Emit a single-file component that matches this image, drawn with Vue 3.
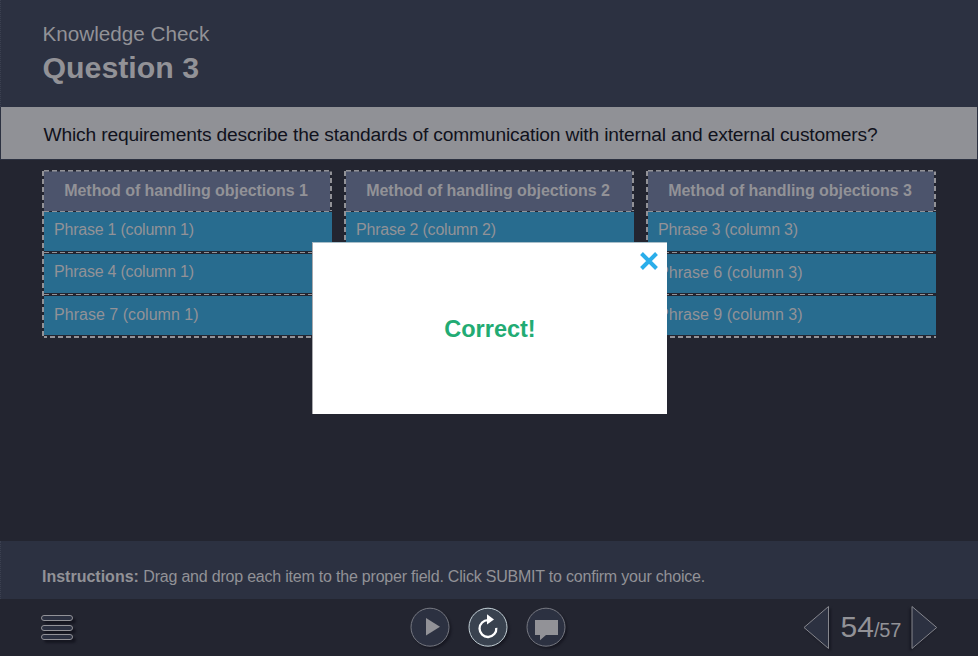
<script setup>
import { ref } from 'vue'

const showResult = ref(true)
const page = 54
const total = 57
const columns = [
    { title: 'Method of handling objections 1', phrases: [{ text: 'Phrase 1 (column 1)' }, { text: 'Phrase 4 (column 1)' }, { text: 'Phrase 7 (column 1)', placed: true }] },
    { title: 'Method of handling objections 2', phrases: [{ text: 'Phrase 2 (column 2)' }, { text: '' }, { text: '' }] },
    { title: 'Method of handling objections 3', phrases: [{ text: 'Phrase 3 (column 3)' }, { text: 'Phrase 6 (column 3)', placed: true }, { text: 'Phrase 9 (column 3)', placed: true }] },
]
</script>

<template>
    <div class="player">
        <header class="top">
            <p class="kicker">Knowledge Check</p>
            <h1>Question 3</h1>
        </header>
        <div class="question"><span>Which requirements describe the standards of communication with internal and external customers?</span></div>
        <main class="board">
            <div class="column" v-for="column of columns" :key="column.title">
                <div class="heading"><span>{{ column.title }}</span></div>
                <div class="phrase" v-for="(phrase, i) of column.phrases" :key="i" :class="{ placed: phrase.placed }">
                    <span>{{ phrase.text }}</span>
                </div>
            </div>
        </main>
        <div class="instructions"><p><b>Instructions:</b> <span>Drag and drop each item to the proper field. Click SUBMIT to confirm your choice.</span></p></div>
        <footer class="controls">
            <button class="menu" aria-label="Menu"><i></i><i></i><i></i></button>
            <div class="round-buttons">
                <button class="round" aria-label="Play">
                    <svg width="40" height="40" viewBox="0 0 40 40">
                        <circle cx="20" cy="19.2" r="19" />
                        <path class="glyph" d="M16 10 L30 18.7 L16 27.5 Z" />
                    </svg>
                </button>
                <button class="round active" aria-label="Replay">
                    <svg width="40" height="40" viewBox="0 0 40 40">
                        <circle cx="20" cy="19.2" r="19" />
                        <path class="arc" d="M28.3 19.8 A8.4 8.4 0 1 1 20.3 12.2" />
                        <path class="glyph" d="M19 6.2 L26 11.6 L19 16.5 Z" />
                    </svg>
                </button>
                <button class="round" aria-label="Comment">
                    <svg width="40" height="40" viewBox="0 0 40 40">
                        <circle cx="20" cy="19.2" r="19" />
                        <path class="glyph" d="M9 12 H32 V27 H20 L14 32.3 V27 H9 Z" />
                    </svg>
                </button>
            </div>
            <div class="pager">
                <svg class="arrow" width="28" height="46" viewBox="0 0 28 46">
                    <path d="M1 22.5 L25.5 1.5 V43.5 Z" />
                </svg>
                <div class="pages"><span class="current">{{ page }}</span><span class="total">/{{ total }}</span></div>
                <svg class="arrow next" width="28" height="46" viewBox="0 0 28 46">
                    <path d="M1 1.5 L25.7 22.5 L1 43.5 Z" />
                </svg>
            </div>
        </footer>
        <div class="popup" v-if="showResult">
            <button class="close" aria-label="Close" @click="showResult = false">
                <svg width="20" height="20" viewBox="0 0 20 20">
                    <path d="M2.5 2.5 L17.5 17.5 M17.5 2.5 L2.5 17.5" />
                </svg>
            </button>
            <strong>Correct!</strong>
        </div>
    </div>
</template>

<style>
body {
    margin: 0;
    background: #232530;
}
</style>

<style scoped>
.player {
    position: relative;
    display: flex;
    flex-direction: column;
    width: 978px;
    height: 656px;
    overflow: hidden;
    box-sizing: border-box;
    background: #232530;
    color: #929297;
    font-family: "Liberation Sans", Arial, sans-serif;
}

.player * {
    box-sizing: border-box;
}

button {
    padding: 0;
    border: none;
    background: none;
}

svg {
    display: block;
}

.top {
    height: 107px;
    padding: 22px 0 0 41.5px;
    background: #2c3141;
    border-left: 1px dotted #3b4050;
}

.kicker {
    margin: 0;
    font-size: 20.7px;
    line-height: 24px;
}

h1 {
    margin: 4px 0 0;
    font-size: 30.3px;
    line-height: 36px;
}

.question {
    height: 53px;
    padding: 16px 0 0 42.5px;
    border: 1px solid #2c3141;
    border-top: none;
    background: #909196;
    color: #10121c;
    font-size: 19.2px;
    line-height: 24px;
    letter-spacing: -0.155px;
    white-space: nowrap;
}

.board {
    display: flex;
    gap: 12px;
    height: 381px;
    padding: 9px 42px 0;
}

.column {
    --dash-x: repeating-linear-gradient(90deg, #929297 0 5px, transparent 5px 8px);
    --dash-y: repeating-linear-gradient(180deg, #929297 0 5px, #232530 5px 8px);
    width: 290px;
    height: 169px;
    padding-left: 2px;
    background: var(--dash-y) 0 2px / 2px 100% no-repeat, var(--dash-x) 0 100% / 100% 2px no-repeat;
}

.heading {
    --dash-x: repeating-linear-gradient(90deg, #929297 0 5px, #232530 5px 8px);
    height: 43px;
    padding: 12px 4px 0 0;
    background:
        var(--dash-x) 0 1px / 100% 1.5px no-repeat,
        var(--dash-x) 0 100% / 100% 1.5px no-repeat,
        var(--dash-y) 100% 1px / 2px 100% no-repeat,
        linear-gradient(transparent 1px, #4c546c 1px);
    font-size: 16px;
    font-weight: bold;
    line-height: 20px;
    letter-spacing: -0.06px;
    text-align: center;
}

.phrase {
    height: 42px;
    padding: 8px 0 0 10px;
    background: var(--dash-x) 0 40px / 100% 1px no-repeat, linear-gradient(#286c8f 39px, #232530 39px);
    font-size: 16px;
    line-height: 20px;
    letter-spacing: -0.22px;
}

.phrase.placed {
    padding-top: 9px;
    letter-spacing: 0.03px;
}

.phrase:last-child {
    background: linear-gradient(#286c8f 39px, transparent 39px);
}

.instructions {
    height: 58px;
    padding: 26px 0 0 41px;
    border-left: 1px dotted #3b4050;
    background: #2c3141;
    font-size: 16px;
    line-height: 20px;
    white-space: nowrap;
}

.instructions p {
    margin: 0;
}

.instructions span {
    letter-spacing: -0.21px;
}

.controls {
    display: grid;
    grid-template-columns: 368px 1fr 175px;
    height: 57px;
    padding-left: 41px;
}

.menu {
    display: flex;
    flex-direction: column;
    justify-content: space-between;
    width: 32px;
    height: 25px;
    margin-top: 16px;
    filter: drop-shadow(3px 3px 1px #151620);
}

.menu i {
    width: 32px;
    height: 6px;
    border: 1px solid #929297;
    border-radius: 3px;
    background: #2c3141;
}

.round-buttons {
    display: flex;
    gap: 18px;
    padding: 9px 0 0 1px;
}

.round {
    width: 40px;
    height: 40px;
    filter: drop-shadow(2px 2px 1px #171822);
}

.round svg {
    overflow: visible;
}

.round circle {
    fill: #2c3141;
    stroke: #777982;
    stroke-width: 1;
}

.round .glyph {
    fill: #929297;
}

.round.active circle {
    fill: #39424f;
    stroke: #c5d2d8;
}

.round.active .glyph {
    fill: #fff;
}

.arc {
    fill: none;
    stroke: #fff;
    stroke-width: 2.3;
}

.pager {
    display: flex;
    padding-top: 6px;
}

.arrow {
    filter: drop-shadow(2px 2px 1px #171822);
}

.arrow.next {
    filter: drop-shadow(-2px 2px 1px #171822);
}

.arrow path {
    fill: #2c3141;
    stroke: #85868d;
}

.pages {
    width: 80px;
    padding: 4px 0 0 9.5px;
    line-height: 36px;
    white-space: nowrap;
}

.current {
    font-size: 30px;
}

.total {
    font-size: 20px;
    letter-spacing: -0.2px;
}

.popup {
    position: absolute;
    top: 242px;
    left: 312px;
    display: grid;
    place-items: center;
    width: 355px;
    height: 172px;
    padding-top: 2px;
    border-top: 1px solid #a9bfca;
    border-left: 1px solid #a9a9ad;
    background: #fff;
    color: #22ab73;
    font-size: 23.5px;
}

.close {
    position: absolute;
    top: 8px;
    right: 8px;
}

.close path {
    fill: none;
    stroke: #2baeea;
    stroke-width: 4;
}
</style>
